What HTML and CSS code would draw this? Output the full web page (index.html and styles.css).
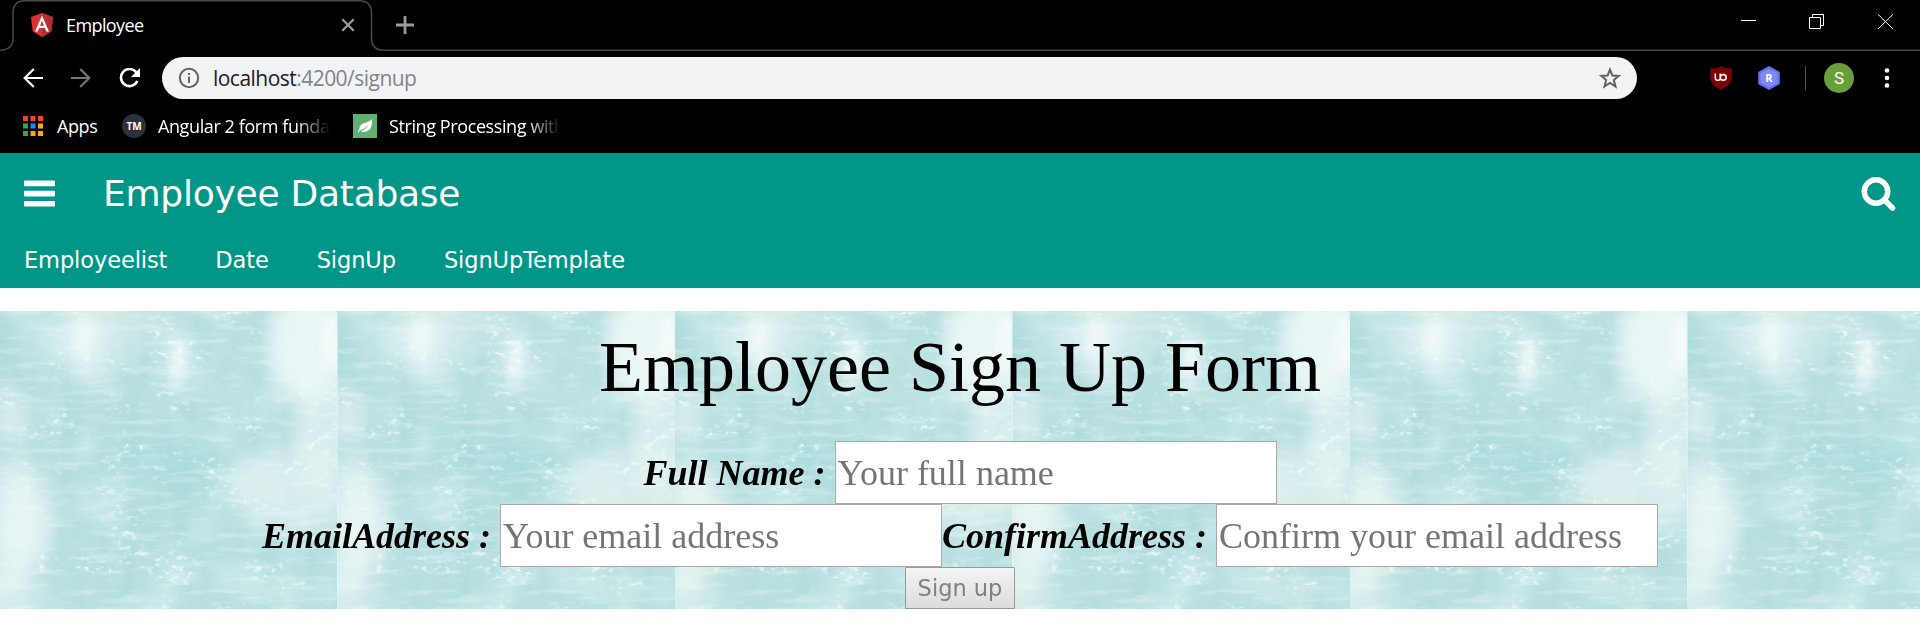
FILE: index.html
```html
<!DOCTYPE html>
<html lang="en">
<head>
<meta charset="utf-8">
<title>Employee</title>
<link rel="stylesheet" href="styles.css">
</head>
<body>
<header class="browser">
  <div class="tabstrip">
    <svg class="tab-outline" width="1920" height="52" viewBox="0 0 1920 52" fill="none" stroke="#484848" stroke-width="1.5"><path d="M0 50.2H1Q13 49.500 13 38V13Q13 .8 25 .8H359Q371.500 .8 371.500 13V38Q371.500 50.200 384 50.200H1920"/></svg>
    <svg class="favicon" width="24" height="26" viewBox="0 0 24 26"><path fill="#dd3036" d="M12 1 23 5 21.300 19.500 12 25 2.700 19.500 1 5Z"/><path fill="#b52e31" d="M12 1 23 5 21.300 19.500 12 25Z"/><path fill="#fff" fill-rule="evenodd" d="M12 3.500 5 19.500H7.700L9.100 15.900H14.900L16.300 19.500H19ZM12 8.700 14 13.700H10Z"/></svg>
    <span class="tab-title">Employee</span>
    <svg class="tab-close" width="14" height="14" viewBox="0 0 14 14" stroke="#9c9c9c" stroke-width="2.200"><path d="M1.300 1.300 12.700 12.700M12.700 1.300 1.300 12.700"/></svg>
    <svg class="tab-new" width="18" height="18" viewBox="0 0 18 18" stroke="#9c9c9c" stroke-width="2.800"><path d="M9 0V18M0 9H18"/></svg>
    <svg class="win-btns" width="154" height="18" viewBox="0 0 154 18" fill="none" stroke="#fff" stroke-width="1"><path d="M0 7.500H15M68.500 4.500H79.500V15.500H68.500ZM71.500 4V1.500H82.500V12.500H80M137 1.300 152 16M152 1.300 137 16"/></svg>
  </div>
  <div class="toolbar">
    <svg class="nav-arrow" width="20" height="20" viewBox="0 0 20 20" fill="none" stroke="#fff" stroke-width="2.200"><path d="M20 10H1.500M10.800 1 1.700 10 10.800 19"/></svg>
    <svg class="nav-arrow forward" width="20" height="20" viewBox="0 0 20 20" fill="none" stroke="#757575" stroke-width="2.200"><path d="M0 10H18.500M9.200 1 18.300 10 9.200 19"/></svg>
    <svg class="reload" width="22" height="20" viewBox="0 0 22 20"><path fill="none" stroke="#fff" stroke-width="2.600" d="M17.300 4.400A8.500 8.500 0 1 0 18.300 13"/><path fill="#fff" d="M21 0V9H12Z"/></svg>
    <div class="omnibox">
      <svg width="22" height="22" viewBox="0 0 22 22"><circle cx="11" cy="11" r="9.200" fill="none" stroke="#5f6368" stroke-width="2"/><path fill="#5f6368" d="M10 6h2v2h-2zM10 9.800h2v6.200h-2z"/></svg>
      <span class="url"><b>localhost</b>:4200/signup</span>
      <svg class="star" width="22" height="22" viewBox="0 0 24 24" fill="none" stroke="#5f6368" stroke-width="2.200"><path d="M12 2.800 14.600 9.200 21.600 9.700 16.200 14.200 18 21.200 12 17.400 6 21.200 7.800 14.200 2.400 9.700 9.400 9.200Z"/></svg>
    </div>
    <svg class="ublock" width="22" height="24" viewBox="0 0 22 24"><path fill="#800000" stroke="#4d1111" d="M11 .5Q15 3 21.500 3V12Q21 19 11 23.500 1 19 .5 12V3Q7 3 11 .5Z"/><path fill="none" stroke="#fff" stroke-width="1.500" d="M5.300 7.500V12.200Q5.300 14.200 7.300 14.200H8.200Q10.200 14.200 10.200 12.200V7.500M10.200 11.400A3 2.900 0 1 0 13.400 8.400Q10.500 8.700 10.300 11.500"/></svg>
    <svg class="ext-r" width="22" height="24" viewBox="0 0 22 24"><path fill="#6670e8" d="M11 0 21.800 6V18L11 24 .2 18V6Z"/><path fill="#7f88f8" d="M11 2.500 19.500 7.200V16.800L11 21.500 2.500 16.800V7.200Z"/><text class="badge-r" x="11" y="16" text-anchor="middle">R</text></svg>
    <span class="divider"></span>
    <span class="avatar">S</span>
    <svg class="kebab" width="6" height="22" viewBox="0 0 6 22" fill="#fff"><circle cx="3" cy="3.500" r="2.300"/><circle cx="3" cy="11" r="2.300"/><circle cx="3" cy="18.500" r="2.300"/></svg>
  </div>
  <div class="bookmarks">
    <svg class="apps" width="20" height="20" viewBox="0 0 20 20"><path fill="#f44336" d="M0 0h5v5H0zM7.500 0h5v5h-5zM15 0h5v5h-5z"/><path fill="#34a853" d="M0 7.500h5v5H0zM0 15h5v5H0z"/><path fill="#1e88f5" d="M7.500 7.500h5v5h-5z"/><path fill="#fbab0c" d="M15 7.500h5v5h-5zM7.500 15h5v5h-5zM15 15h5v5h-5z"/></svg>
    <span class="bm-apps">Apps</span>
    <span class="tm">TM</span>
    <span class="bm bm-angular">Angular 2 form funda</span>
    <svg class="leaf" width="24" height="24" viewBox="0 0 24 24"><path fill="#60b074" d="M0 0h24v24H0z"/><path fill="#fff" d="M19 5Q20 17 11 18 9 18 7.500 17.300 13 15.500 16 10 12 15 6.500 16.500L5.500 18.500 4.700 18Q6 16 6.500 14 7 9.500 13 8.500 17 8 19 5Z"/></svg>
    <span class="bm bm-string">String Processing with</span>
  </div>
</header>
<nav class="appbar">
  <div class="appbar-top">
    <svg class="burger" width="31" height="27" viewBox="0 0 31 27" fill="#fff"><rect y=".5" width="31" height="5.700" rx="1"/><rect y="10.700" width="31" height="5.700" rx="1"/><rect y="20.900" width="31" height="5.700" rx="1"/></svg>
    <span class="brand">Employee Database</span>
    <svg class="search" width="36" height="36" viewBox="0 0 36 36" fill="none" stroke="#fff"><circle cx="15" cy="16.500" r="11.700" stroke-width="5.500"/><path stroke-width="5.500" stroke-linecap="round" d="M24 25.500 31.500 33"/></svg>
  </div>
  <div class="links">
    <a>Employeelist</a><a>Date</a><a>SignUp</a><a>SignUpTemplate</a>
  </div>
</nav>
<main class="signup">
  <svg class="texture" width="1920" height="298" viewBox="0 0 1920 298">
    <defs>
      <filter id="soft" x="-50%" y="-50%" width="200%" height="200%"><feGaussianBlur stdDeviation="10 12"/></filter>
      <filter id="softer" x="-50%" y="-50%" width="200%" height="200%"><feGaussianBlur stdDeviation="5 8"/></filter>
      <filter id="patches" x="0" y="0" width="100%" height="100%" color-interpolation-filters="sRGB"><feTurbulence type="fractalNoise" baseFrequency=".016 .014" numOctaves="3" seed="8"/><feColorMatrix values="0 0 0 0 .9  0 0 0 0 .965  0 0 0 0 .97  3 0 0 0 -1.350"/></filter>
      <filter id="streaks" x="0" y="0" width="100%" height="100%" color-interpolation-filters="sRGB"><feTurbulence type="fractalNoise" baseFrequency=".025 .14" numOctaves="3" seed="5"/><feColorMatrix values="0 0 0 0 .93  0 0 0 0 .98  0 0 0 0 .98  3 0 0 0 -1.500"/></filter>
      <filter id="columns" x="0" y="0" width="100%" height="100%" color-interpolation-filters="sRGB"><feTurbulence type="fractalNoise" baseFrequency=".05 .008" numOctaves="2" seed="14"/><feColorMatrix values="0 0 0 0 .6  0 0 0 0 .83  0 0 0 0 .83  2.400 0 0 0 -1.150"/></filter>
      <filter id="grain" x="0" y="0" width="100%" height="100%" color-interpolation-filters="sRGB">
        <feTurbulence type="fractalNoise" baseFrequency=".13 .2" numOctaves="3" seed="21"/><feColorMatrix values="0 0 0 0 .95  0 0 0 0 1  0 0 0 0 1  5 0 0 0 -2.700" result="flecks"/>
        <feTurbulence type="fractalNoise" baseFrequency=".02 .03" numOctaves="2" seed="31"/><feColorMatrix values="0 0 0 0 1  0 0 0 0 1  0 0 0 0 1  6 0 0 0 -3"/>
        <feComposite in="flecks" operator="in"/>
      </filter>
      <clipPath id="edge"><rect width="337.500" height="298"/></clipPath>
      <g id="tile" clip-path="url(#edge)">
        <rect width="338" height="298" fill="#b9e0e0"/>
        <rect width="338" height="298" filter="url(#columns)" opacity=".4"/>
        <rect width="338" height="298" filter="url(#patches)" opacity=".45"/>
        <g filter="url(#soft)">
          <ellipse cx="165" cy="150" rx="65" ry="30" fill="#a9dada" opacity=".6"/>
          <ellipse cx="4" cy="30" rx="12" ry="35" fill="#9fd6d6" opacity=".6"/>
        </g>
        <g filter="url(#soft)" fill="#f0f8f8">
          <ellipse cx="82" cy="30" rx="20" ry="38" opacity=".7"/>
          <ellipse cx="175" cy="50" rx="13" ry="30" opacity=".65"/>
          <ellipse cx="305" cy="35" rx="38" ry="55" opacity=".9"/>
          <ellipse cx="325" cy="110" rx="32" ry="60" opacity=".55"/>
          <ellipse cx="290" cy="180" rx="55" ry="45" opacity=".5"/>
          <ellipse cx="20" cy="210" rx="29" ry="55" opacity=".8"/>
          <ellipse cx="5" cy="275" rx="30" ry="22" opacity=".7"/>
          <ellipse cx="10" cy="110" rx="20" ry="24" opacity=".5"/>
          <ellipse cx="285" cy="280" rx="45" ry="10" opacity=".5"/>
          <ellipse cx="120" cy="10" rx="60" ry="18" opacity=".4"/>
        </g>
        <rect width="338" height="298" filter="url(#streaks)" opacity=".4"/>
        <rect width="338" height="298" filter="url(#grain)" opacity=".65"/>
        <g filter="url(#softer)" fill="#f8fcfc"><ellipse cx="83" cy="28" rx="10" ry="16" opacity=".6"/><ellipse cx="179" cy="52" rx="7" ry="20" opacity=".7"/><ellipse cx="332" cy="28" rx="9" ry="34" opacity=".8"/></g>
      </g>
    </defs>
    <use href="#tile"/><use href="#tile" x="337.500"/><use href="#tile" x="675"/><use href="#tile" x="1012.500"/><use href="#tile" x="1350"/><use href="#tile" x="1687.500"/>
  </svg>
  <form class="form">
    <h1>Employee Sign Up Form</h1>
    <div class="row"><label>Full Name :</label><input type="text" placeholder="Your full name"></div>
    <div class="row"><label>EmailAddress :</label><input type="text" placeholder="Your email address"><label>ConfirmAddress :</label><input type="text" placeholder="Confirm your email address"></div>
    <button type="button" disabled>Sign up</button>
  </form>
</main>
</body>
</html>
```
FILE: styles.css
```css
* { box-sizing: border-box; }
body { margin: 0; background: #fff; overflow: hidden; }
svg { display: block; flex: none; }

.browser { height: 153px; background: #000; color: #fff; font-family: "Open Sans", "Noto Sans", sans-serif; }
.browser span { white-space: nowrap; flex: none; }
.tabstrip { position: relative; display: flex; align-items: center; height: 52px; padding: 0 17px 2px 30px; }
.tab-outline { position: absolute; left: 0; top: 0; }
.tab-title { width: 275px; margin-left: 12px; font-size: 18px; letter-spacing: -0.6px; }
.tab-new { margin-left: 41px; }
.win-btns { margin: -6px 8px 0 auto; }

.toolbar { display: flex; align-items: center; height: 52px; padding: 0 0 0 23px; }
.forward { margin-left: 28px; }
.reload { margin-left: 28px; }
.omnibox { display: flex; flex: none; align-items: center; width: 1475px; height: 42px; margin-left: 21px; padding: 0 16px; border-radius: 21px; background: #f1f3f4; }
.url { margin-left: 13px; font-size: 21px; letter-spacing: -0.53px; color: #80868b; }
.url b { font-weight: 400; color: #202124; }
.star { margin-left: auto; }
.ublock { margin-left: 73px; }
.ext-r { margin-left: 26px; }
.badge-r { font: bold 11px "Open Sans", sans-serif; fill: #fff; }
.divider { width: 1px; height: 24px; margin-left: 25px; background: #555; }
.avatar { width: 30px; height: 30px; margin-left: 18px; border-radius: 50%; background: #689f38; font: 17px/30px Roboto, sans-serif; text-align: center; }
.kebab { margin-left: 30px; }

.bookmarks { display: flex; align-items: center; height: 44px; padding-left: 23px; font-size: 18px; }
.bm-apps { width: 65px; margin-left: 14px; letter-spacing: -0.4px; }
.tm { width: 24px; height: 24px; border-radius: 50%; background: #2e313d; font: bold 10px/24px "Open Sans", sans-serif; text-align: center; }
.bm { width: 172px; margin-left: 12px; letter-spacing: -0.4px; -webkit-mask-image: linear-gradient(90deg, #000 80%, transparent); mask-image: linear-gradient(90deg, #000 80%, transparent); }
.leaf { margin-left: 23px; }

.appbar { height: 135px; background: #009688; color: #fff; font-family: Verdana, "DejaVu Sans", sans-serif; }
.appbar-top { display: flex; align-items: center; height: 80px; padding: 0 23px 0 24px; }
.brand { margin-left: 48px; font-size: 36px; letter-spacing: -0.25px; }
.search { margin-left: auto; }
.links { display: flex; gap: 48px; padding: 13px 24px 0; font-size: 22.5px; line-height: 28px; letter-spacing: -0.1px; }

.signup { position: relative; height: 298px; margin-top: 23px; font-family: "Times New Roman", "Liberation Serif", serif; }
.texture { position: absolute; left: 0; top: 0; }
.form { position: relative; display: flex; flex-direction: column; align-items: center; padding-top: 15px; }
h1 { margin: 0 0 32px; font-size: 72px; line-height: 83px; font-weight: 400; }
.row { display: flex; align-items: center; height: 63px; font-size: 36px; }
.row label { font-weight: 700; font-style: italic; margin-right: 9px; white-space: nowrap; }
.row input { width: 442px; height: 63px; padding: 1px 2px; border: 1px solid #a9a9a9; border-radius: 0; background: #fff; font: inherit; }
.row input::placeholder { color: #757575; }
button { width: 110px; height: 42px; padding: 0; border: 1px solid #999; border-radius: 1px; background: linear-gradient(#f4f4f4, #dcdcdc); color: #808080; font: 22.5px Verdana, "DejaVu Sans", sans-serif; }
```
